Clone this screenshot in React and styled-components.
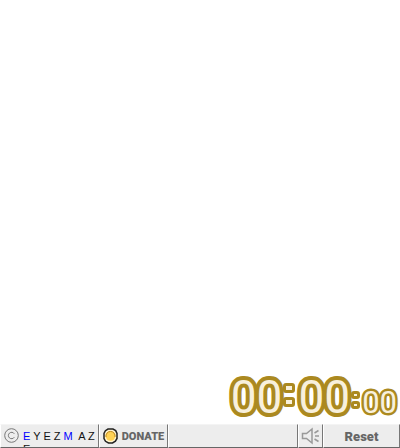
import { styled, createGlobalStyle } from 'styled-components';

const GlobalStyle = createGlobalStyle`
    * {
        box-sizing: border-box;
    }
    body {
        margin: 0;
        background: #fff;
        font-family: "Liberation Sans", Arial, sans-serif;
    }
`;

const Page = styled.div`
    display: flex;
    flex-direction: column;
    justify-content: flex-end;
    min-height: 100vh;
`;

const Timer = styled.div`
    display: flex;
    justify-content: flex-end;
    align-items: baseline;
    padding-right: 3px;
    line-height: 42px;
    font-family: Roboto, sans-serif;
    font-weight: 400;
    color: #f8f0dc;
`;

const Digits = styled.span`
    font-size: ${({ $small }) => ($small ? 31 : 46)}px;
    -webkit-text-stroke: ${({ $small }) => ($small ? 5 : 8)}px #ab8920;
    paint-order: stroke fill;
`;

const Dots = styled.svg`
    flex: none;
    align-self: center;
    margin: ${({ $small }) => ($small ? '0 2px 0 1px' : '0 3px 10px 1px')};
    fill: #f8f0dc;
    stroke: #ab8920;
`;

const Toolbar = styled.footer`
    display: grid;
    grid-template-columns: 99px 69px 1fr 25px 77px;
    height: 24px;
`;

const Cell = styled.div`
    display: flex;
    align-items: center;
    min-width: 0;
    overflow: hidden;
    background: #ededed;
    border: 1px solid;
    border-color: #f4f4f4 #777 #666 #fff;
`;

const CellButton = styled(Cell).attrs({ as: 'button', type: 'button' })`
    justify-content: center;
    gap: 4px;
    padding: 0;
    border-radius: 0;
    font-family: Roboto, "Liberation Sans", sans-serif;
    font-weight: 900;
    color: #666;
    cursor: pointer;
`;

const Label = styled.span`
    font-size: ${({ $large }) => ($large ? 13 : 11)}px;
`;

const Credit = styled.a`
    display: flex;
    align-self: flex-start;
    gap: 4px;
    padding: 3px 0 0 3px;
    color: #111;
    font-size: 11px;
    line-height: 13px;
    text-decoration: none;
    white-space: nowrap;
`;

const CreditName = styled.span`
    padding-top: 2px;
`;

const CreditLine = styled.span`
    display: block;
`;

const Blue = styled.span`
    color: #00f;
`;

const Icon = styled.svg`
    flex: none;
`;

function Colon({ width, height, dot, small }) {
    return (
        <Dots
            $small={small}
            width={width}
            height={height}
            viewBox={`0 0 ${width} ${height}`}
            strokeWidth="3"
        >
            <rect x="1.5" y="1.5" width={width - 3} height={dot} rx="1.5" />
            <rect x="1.5" y={height - dot - 1.5} width={width - 3} height={dot} rx="1.5" />
        </Dots>
    );
}

function CopyrightIcon() {
    return (
        <Icon width="15" height="15" viewBox="0 0 15 15" fill="none" stroke="#777">
            <circle cx="7.5" cy="7.5" r="6.8" />
            <path d="M10.3 5.8A3.2 3.2 0 1 0 10.3 9.2" />
        </Icon>
    );
}

function CoinIcon() {
    return (
        <Icon width="15" height="16" viewBox="0 0 15 16">
            <path
                d="M5 1h5l2.7 1.6L14 5.5v5l-1.6 2.7L9.5 15h-4l-3-1.7L1 10.5v-5L2.4 2.7z"
                fill="#fff4cf"
                stroke="#222"
                strokeWidth="1.5"
            />
            <circle cx="7.5" cy="8" r="4.8" fill="#ffd255" />
            <path d="M3 9a4.6 4.6 0 1 1 9 0" fill="none" stroke="#bd8820" />
        </Icon>
    );
}

function SpeakerIcon() {
    return (
        <Icon width="19" height="18" viewBox="0 0 19 18" fill="none" stroke="#999" strokeWidth="1.5">
            <path d="M1.5 6.5h4L11 2v14l-5.5-4.5h-4z" />
            <path d="M13.5 6L17.5 3.5M14 9h4M13.5 12l4 2.5" />
        </Icon>
    );
}

function App() {
    return (
        <Page>
            <GlobalStyle />
            <Timer role="timer">
                <Digits>00</Digits>
                <Colon width={12} height={24} dot={7} />
                <Digits>00</Digits>
                <Colon width={9} height={18} dot={5} small />
                <Digits $small>00</Digits>
            </Timer>
            <Toolbar>
                <Cell>
                    <Credit href="#">
                        <CopyrightIcon />
                        <CreditName>
                            <CreditLine>
                                <Blue>E</Blue> Y E Z <Blue>M</Blue>&nbsp; A Z
                            </CreditLine>
                            <CreditLine>E</CreditLine>
                        </CreditName>
                    </Credit>
                </Cell>
                <CellButton>
                    <CoinIcon />
                    <Label>DONATE</Label>
                </CellButton>
                <Cell />
                <CellButton aria-label="Sound">
                    <SpeakerIcon />
                </CellButton>
                <CellButton>
                    <Label $large>Reset</Label>
                </CellButton>
            </Toolbar>
        </Page>
    );
}

export default App;
